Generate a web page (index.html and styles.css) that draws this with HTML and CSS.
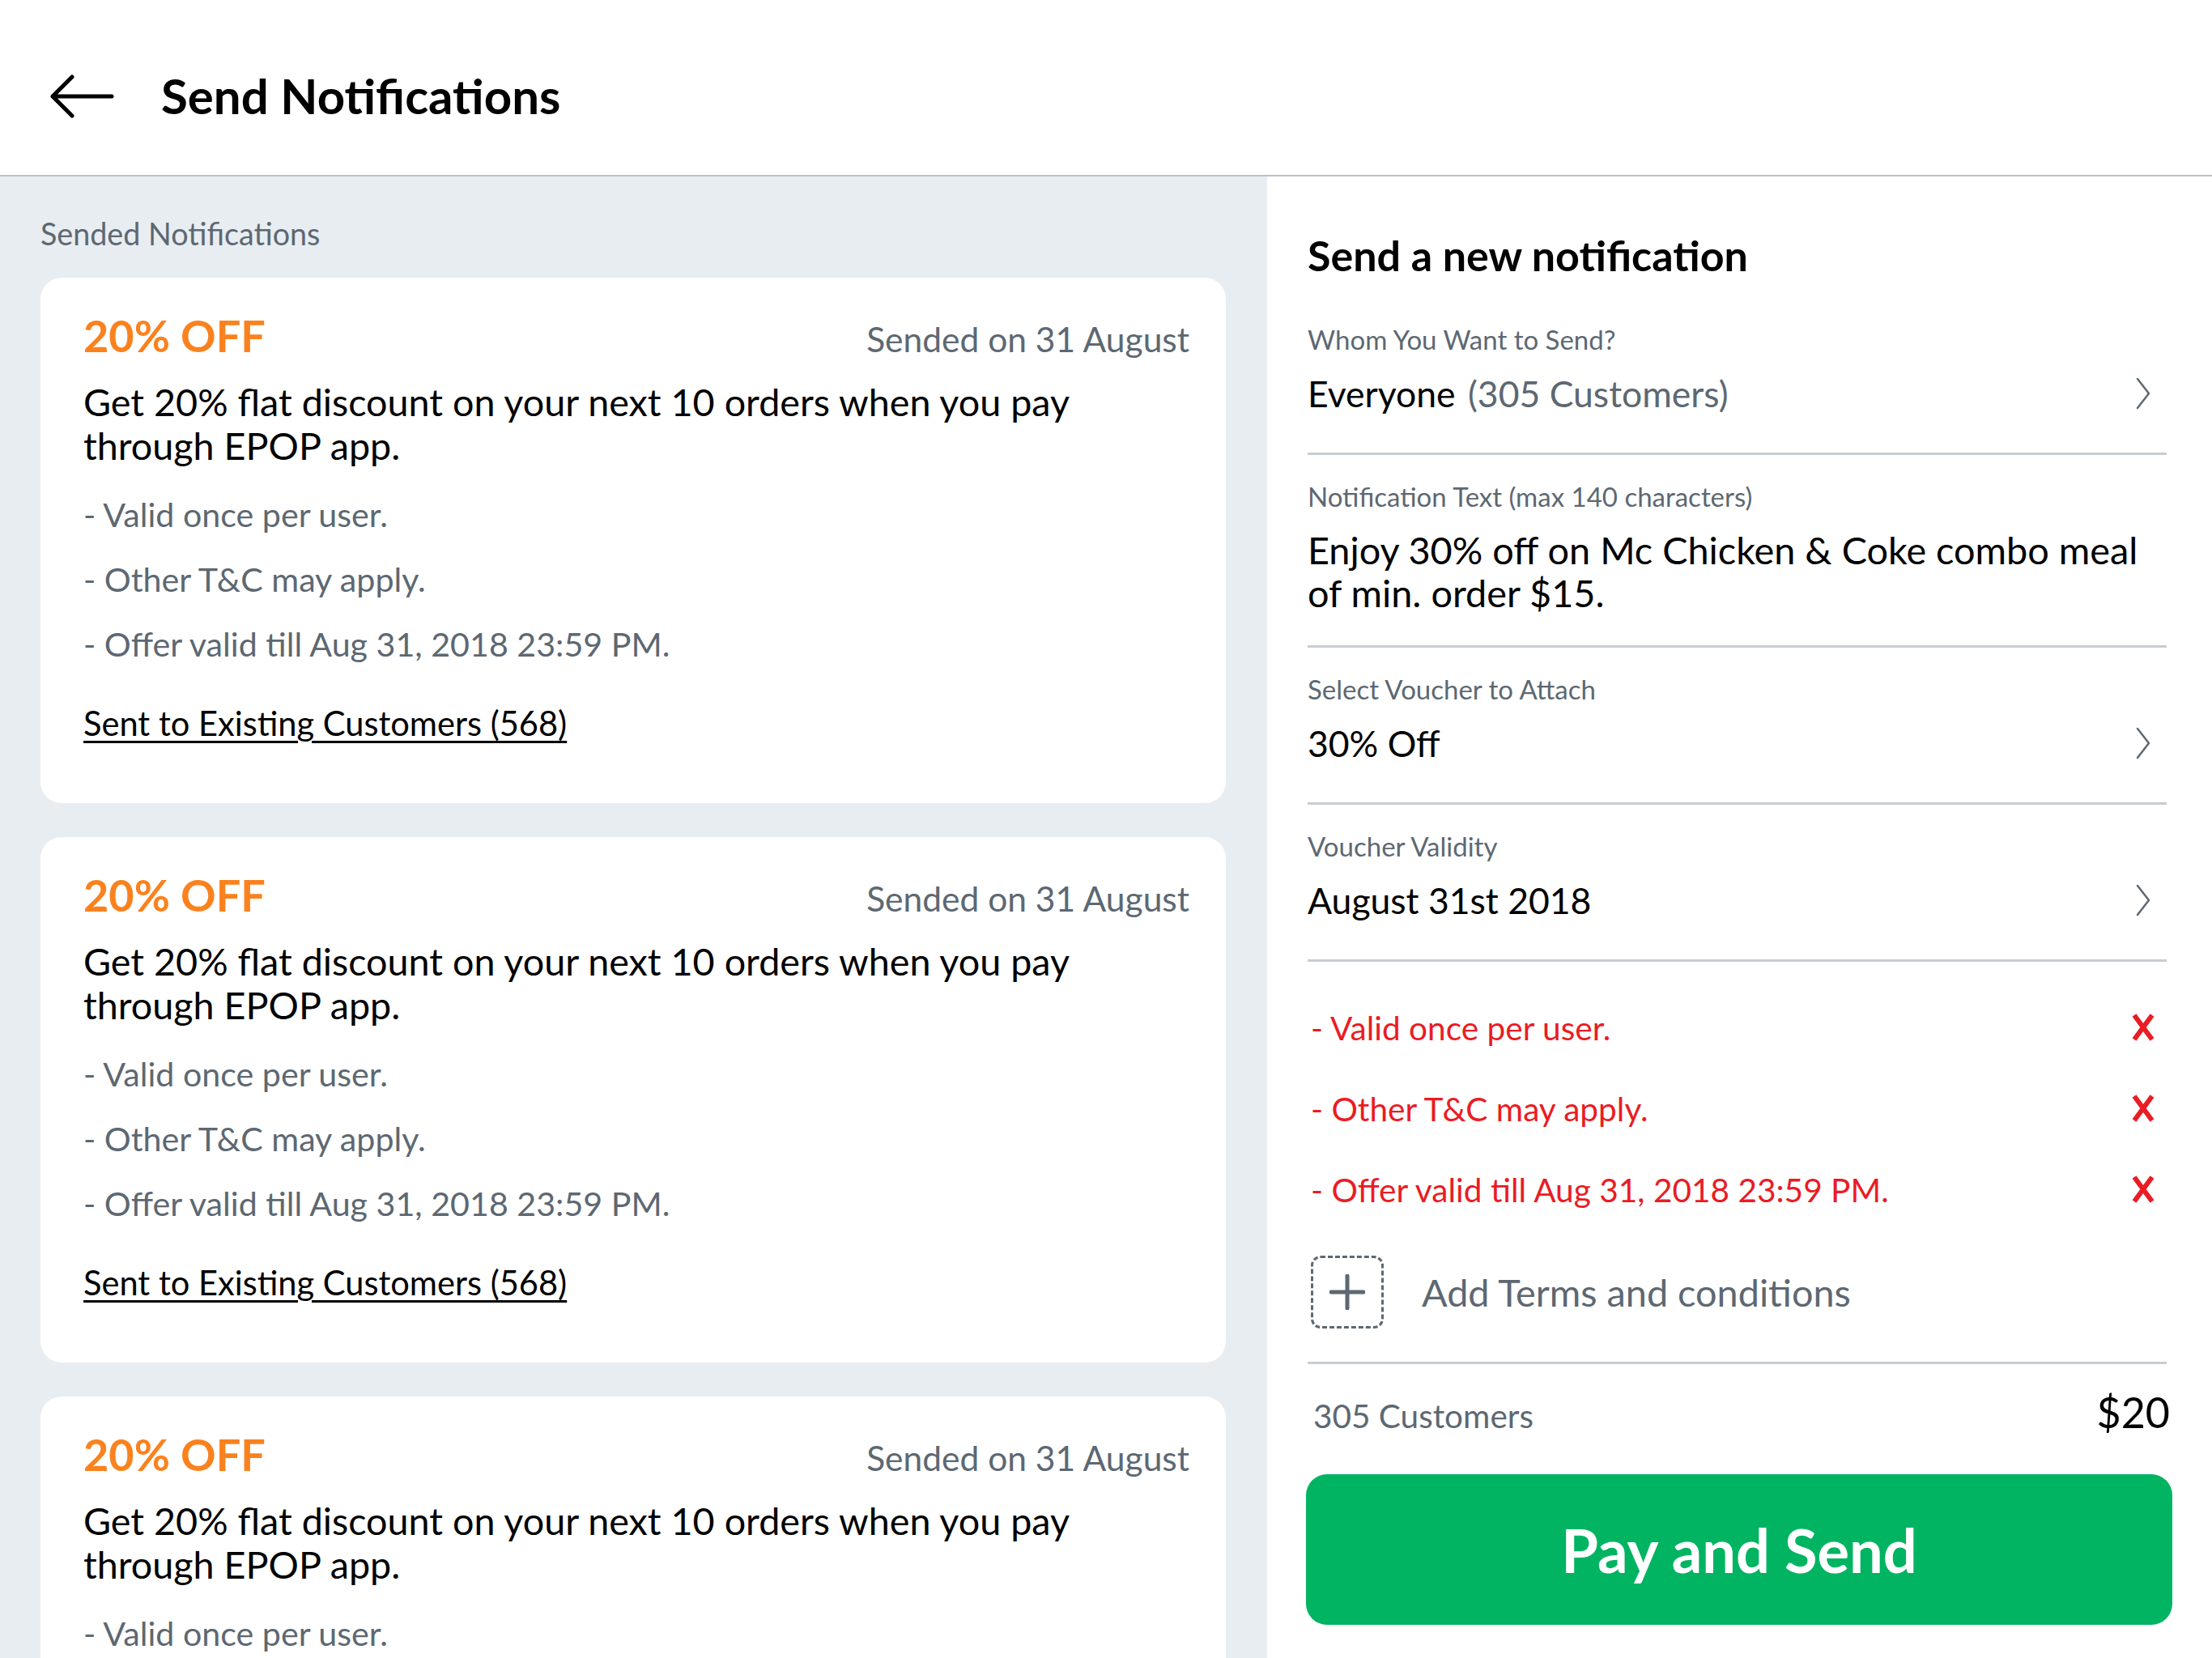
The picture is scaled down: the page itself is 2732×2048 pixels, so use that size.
FILE: index.html
```html
<!DOCTYPE html>
<html lang="en">
<head>
<meta charset="utf-8">
<title>Send Notifications</title>
<link rel="stylesheet" href="styles.css">
</head>
<body>
<div class="app">
  <header class="topbar">
    <svg class="back" width="80" height="56" viewBox="0 0 80 56">
      <path d="M3 28 H76 M3 28 L27 4 M3 28 L27 52" fill="none" stroke="#000" stroke-width="5" stroke-linecap="round" stroke-linejoin="round"/>
    </svg>
    <h1 class="title">Send Notifications</h1>
  </header>
  <main class="content">
    <section class="history">
      <div class="history-label">Sended Notifications</div>
      <div class="cards">
        <article class="card">
          <div class="card-head">
            <span class="offer">20% OFF</span>
            <span class="date">Sended on 31 August</span>
          </div>
          <p class="card-body">Get 20% flat discount on your next 10 orders when you pay<br>through EPOP app.</p>
          <ul class="terms">
            <li>- Valid once per user.</li>
            <li>- Other T&amp;C may apply.</li>
            <li>- Offer valid till Aug 31, 2018 23:59 PM.</li>
          </ul>
          <a class="sent-link" href="#">Sent to Existing Customers (568)</a>
        </article>
        <article class="card">
          <div class="card-head">
            <span class="offer">20% OFF</span>
            <span class="date">Sended on 31 August</span>
          </div>
          <p class="card-body">Get 20% flat discount on your next 10 orders when you pay<br>through EPOP app.</p>
          <ul class="terms">
            <li>- Valid once per user.</li>
            <li>- Other T&amp;C may apply.</li>
            <li>- Offer valid till Aug 31, 2018 23:59 PM.</li>
          </ul>
          <a class="sent-link" href="#">Sent to Existing Customers (568)</a>
        </article>
        <article class="card">
          <div class="card-head">
            <span class="offer">20% OFF</span>
            <span class="date">Sended on 31 August</span>
          </div>
          <p class="card-body">Get 20% flat discount on your next 10 orders when you pay<br>through EPOP app.</p>
          <ul class="terms">
            <li>- Valid once per user.</li>
            <li>- Other T&amp;C may apply.</li>
            <li>- Offer valid till Aug 31, 2018 23:59 PM.</li>
          </ul>
          <a class="sent-link" href="#">Sent to Existing Customers (568)</a>
        </article>
      </div>
    </section>
    <section class="composer">
      <h2 class="composer-title">Send a new notification</h2>
      <div class="field">
        <div class="field-label">Whom You Want to Send?</div>
        <div class="field-row">
          <div class="field-value">Everyone <span class="muted">(305 Customers)</span></div>
          <svg class="chev" width="20" height="40" viewBox="0 0 20 40"><path d="M3 2 L17 20 L3 38" fill="none" stroke="#5d6872" stroke-width="2.5" stroke-linecap="round" stroke-linejoin="round"/></svg>
        </div>
      </div>
      <div class="field field-text">
        <div class="field-label">Notification Text (max 140 characters)</div>
        <div class="field-value multi">Enjoy 30% off on Mc Chicken &amp; Coke combo meal<br>of min. order $15.</div>
      </div>
      <div class="field">
        <div class="field-label">Select Voucher to Attach</div>
        <div class="field-row">
          <div class="field-value">30% Off</div>
          <svg class="chev" width="20" height="40" viewBox="0 0 20 40"><path d="M3 2 L17 20 L3 38" fill="none" stroke="#5d6872" stroke-width="2.5" stroke-linecap="round" stroke-linejoin="round"/></svg>
        </div>
      </div>
      <div class="field">
        <div class="field-label">Voucher Validity</div>
        <div class="field-row">
          <div class="field-value">August 31st 2018</div>
          <svg class="chev" width="20" height="40" viewBox="0 0 20 40"><path d="M3 2 L17 20 L3 38" fill="none" stroke="#5d6872" stroke-width="2.5" stroke-linecap="round" stroke-linejoin="round"/></svg>
        </div>
      </div>
      <div class="tc-block">
        <div class="tc-row">
          <span>- Valid once per user.</span>
          <svg class="remove" width="36" height="36" viewBox="0 0 36 36"><path d="M7 3 L29 33 M29 3 L7 33" stroke="#ea1c24" stroke-width="6" stroke-linecap="butt"/></svg>
        </div>
        <div class="tc-row">
          <span>- Other T&amp;C may apply.</span>
          <svg class="remove" width="36" height="36" viewBox="0 0 36 36"><path d="M7 3 L29 33 M29 3 L7 33" stroke="#ea1c24" stroke-width="6" stroke-linecap="butt"/></svg>
        </div>
        <div class="tc-row">
          <span>- Offer valid till Aug 31, 2018 23:59 PM.</span>
          <svg class="remove" width="36" height="36" viewBox="0 0 36 36"><path d="M7 3 L29 33 M29 3 L7 33" stroke="#ea1c24" stroke-width="6" stroke-linecap="butt"/></svg>
        </div>
        <div class="tc-add">
          <div class="add-box">
            <svg width="44" height="44" viewBox="0 0 44 44"><path d="M22 2 V42 M2 22 H42" stroke="#5d6872" stroke-width="5" stroke-linecap="round"/></svg>
          </div>
          <span class="add-text">Add Terms and conditions</span>
        </div>
      </div>
      <div class="total">
        <span class="total-count">305 Customers</span>
        <span class="total-price">$20</span>
      </div>
      <button class="pay">Pay and Send</button>
    </section>
  </main>
</div>
</body>
</html>
```
FILE: styles.css
```css
* { box-sizing: border-box; }
html, body { margin: 0; padding: 0; }
body {
  width: 2732px;
  height: 2048px;
  overflow: hidden;
  background: #fff;
  font-family: Lato, "Noto Sans", sans-serif;
  color: #000;
}
.app {
  display: flex;
  flex-direction: column;
  height: 2048px;
}
.topbar {
  height: 218px;
  flex: none;
  display: flex;
  align-items: center;
  padding: 20px 0 0 62px;
  border-bottom: 2px solid #b9c1c9;
  background: #fff;
}
.back { flex: none; margin-top: 2px; }
.title {
  margin: 0 0 0 57px;
  font-size: 60px;
  font-weight: 700;
  letter-spacing: 0;
}
.content {
  flex: 1;
  display: flex;
  min-height: 0;
}
.history {
  width: 1565px;
  flex: none;
  background: #e8edf1;
  padding: 50px 51px 0 50px;
  overflow: hidden;
}
.history-label {
  font-size: 37.7px;
  line-height: 42px;
  color: #5d6872;
}
.cards {
  margin-top: 33px;
  display: flex;
  flex-direction: column;
  gap: 42px;
}
.card {
  background: #fff;
  border-radius: 26px;
  padding: 40px 45px 74px 53px;
  flex: none;
}
.card-head {
  display: flex;
  justify-content: space-between;
  align-items: baseline;
  line-height: 64px;
}
.offer {
  font-size: 54px;
  font-weight: 700;
  color: #fa821e;
}
.date {
  font-size: 42.5px;
  color: #5d6872;
}
.card-body {
  margin: 18px 0 0;
  font-size: 46.7px;
  line-height: 54px;
}
.terms {
  list-style: none;
  margin: 18px 0 0;
  padding: 0;
}
.terms li {
  font-size: 41.2px;
  line-height: 80px;
  color: #5d6872;
}
.sent-link {
  display: inline-block;
  margin-top: 33px;
  font-size: 41.6px;
  line-height: 50px;
  color: #000;
  text-decoration: underline;
  text-decoration-thickness: 3px;
  text-underline-offset: 6px;
}
.composer {
  flex: 1;
  padding: 66px 49px 0 48px;
  background: #fff;
}
.composer-title {
  margin: 0 0 22px 2px;
  font-size: 52px;
  line-height: 62px;
  font-weight: 700;
}
.field {
  margin: 0 7px 0 2px;
  padding: 31px 0 46px;
  border-bottom: 3px solid #c8cdd2;
}
.field-text { padding-bottom: 38px; }
.field-label {
  font-size: 33px;
  line-height: 40px;
  color: #5d6872;
}
.field-row {
  display: flex;
  align-items: center;
  justify-content: space-between;
  margin-top: 20px;
}
.field-value {
  font-size: 44.5px;
  line-height: 54px;
}
.field-value.multi {
  margin-top: 20px;
  font-size: 46.8px;
  line-height: 53px;
}
.muted { color: #5d6872; margin-left: 4px; }
.chev { margin-right: 19px; flex: none; }
.tc-block {
  margin: 0 7px 0 2px;
  padding: 31px 0 41px;
  border-bottom: 3px solid #c8cdd2;
}
.tc-row {
  display: flex;
  align-items: center;
  justify-content: space-between;
  height: 100px;
  font-size: 40.6px;
  color: #ea1c24;
  padding-left: 4px;
}
.remove { margin-right: 11px; flex: none; }
.tc-add {
  display: flex;
  align-items: center;
  margin-top: 32px;
}
.add-box {
  width: 90px;
  height: 90px;
  border: 3px dashed #5d6872;
  border-radius: 12px;
  display: flex;
  align-items: center;
  justify-content: center;
  margin-left: 4px;
}
.add-text {
  margin-left: 47px;
  font-size: 46.8px;
  color: #5d6872;
}
.total {
  display: flex;
  justify-content: space-between;
  align-items: baseline;
  padding: 29px 3px 0 9px;
  line-height: 60px;
}
.total-count {
  font-size: 40.5px;
  color: #5d6872;
}
.total-price {
  font-size: 52px;
}
.pay {
  display: block;
  width: 100%;
  height: 186px;
  margin-top: 42px;
  border: none;
  border-radius: 26px;
  background: #00b462;
  color: #fff;
  font-family: inherit;
  font-size: 74px;
  font-weight: 700;
}
```
